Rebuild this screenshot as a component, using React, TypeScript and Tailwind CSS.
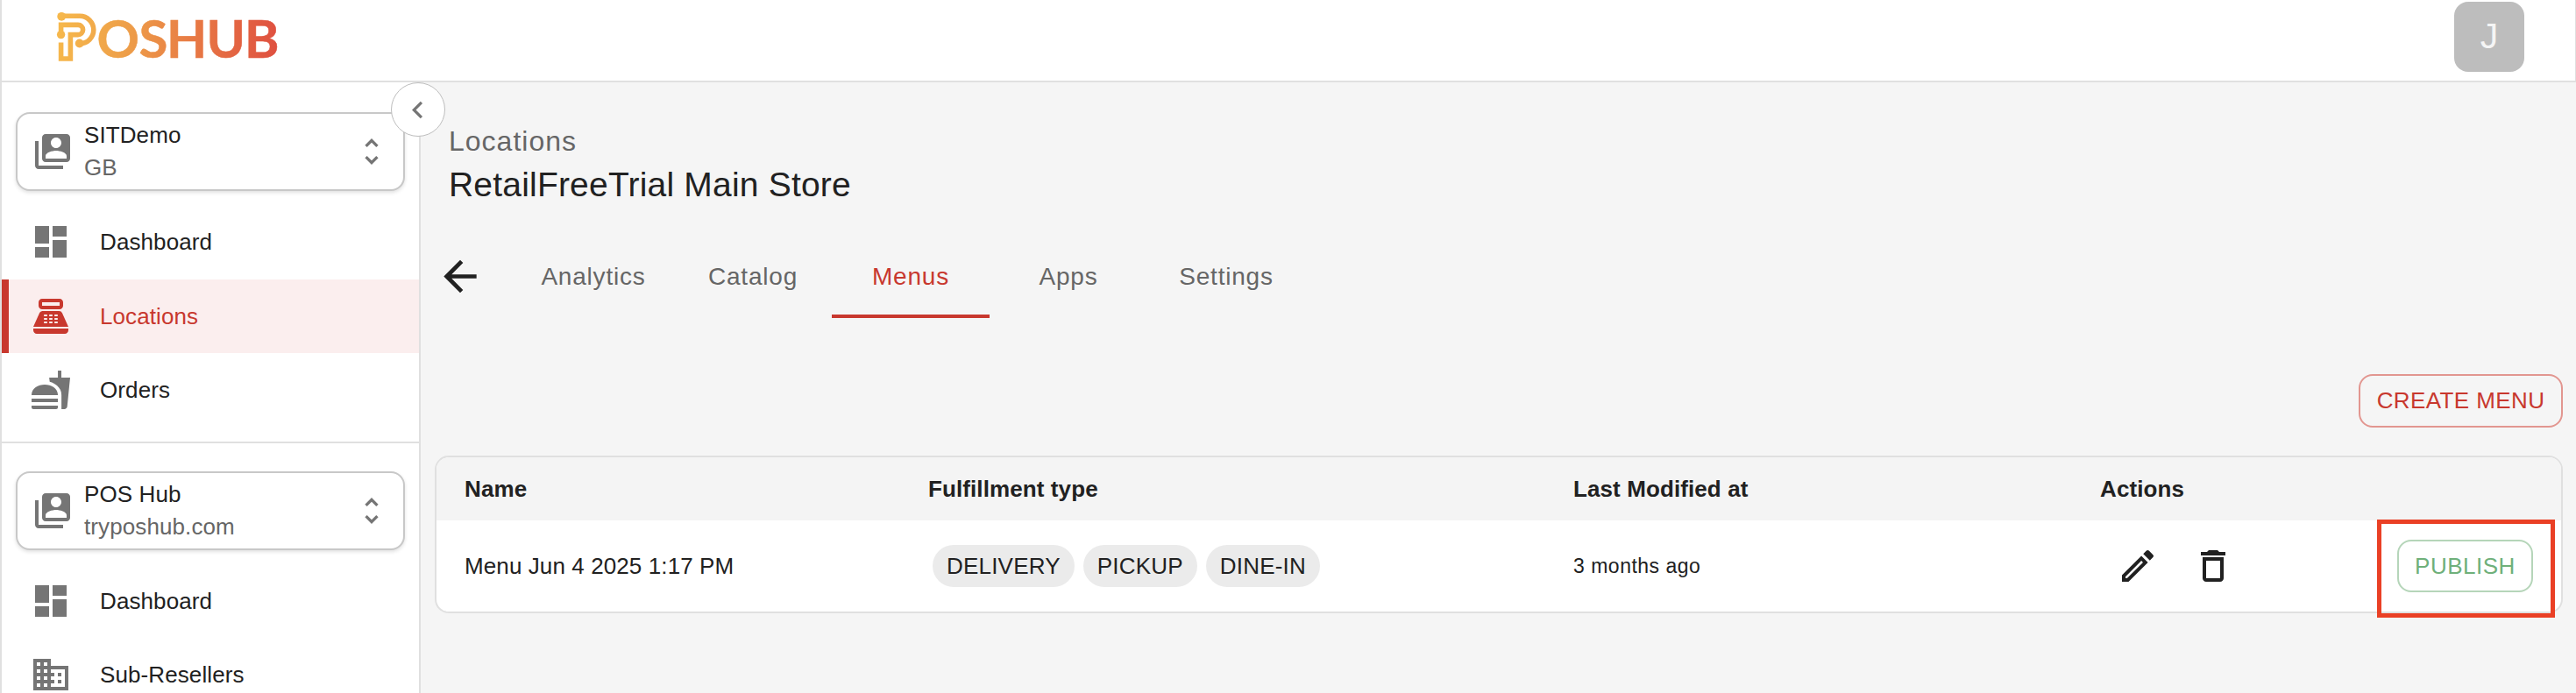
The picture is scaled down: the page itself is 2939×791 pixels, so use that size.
import type { ComponentType, ReactNode } from "react";
import {
  MdArrowBack,
  MdChevronLeft,
  MdDashboard,
  MdDeleteOutline,
  MdDomain,
  MdFastfood,
  MdOutlineEdit,
  MdPointOfSale,
  MdSwitchAccount,
  MdUnfoldMore,
} from "react-icons/md";

type Icon = ComponentType<{ className?: string }>;

function Logo() {
  return (
    <svg width="280" height="92" viewBox="60 0 280 92" className="block overflow-visible" aria-label="POSHUB">
      <defs>
        <linearGradient id="brand" gradientUnits="userSpaceOnUse" x1="66" y1="30" x2="317" y2="50">
          <stop offset="0" stopColor="#f6b84c" />
          <stop offset="0.3" stopColor="#eea049" />
          <stop offset="0.65" stopColor="#e77644" />
          <stop offset="1" stopColor="#df5040" />
        </linearGradient>
      </defs>
      <g fill="none" stroke="url(#brand)" strokeWidth="5.6">
        <path d="M70 18.3H91A15.8 15.8 0 0 1 91 49.9" />
        <path d="M69.6 39.5V28.4H89A5.6 5.6 0 0 1 89 39.6H80.4V67H69.6V48.6" />
      </g>
      <g fill="url(#brand)">
        <circle cx="70.2" cy="18.8" r="4.9" />
        <circle cx="69.6" cy="39.6" r="4.7" />
        <circle cx="90.7" cy="49.5" r="4.9" />
        <text
          x="110.5 158.5 190 235.5 279"
          y="66"
          fontFamily="Lato, sans-serif"
          fontSize="60"
          fontWeight="700"
          stroke="url(#brand)"
          strokeWidth="0.5"
        >
          OSHUB
        </text>
      </g>
    </svg>
  );
}

function AccountSelect({ title, subtitle }: { title: string; subtitle: string }) {
  return (
    <button className="mx-4 flex h-[90px] w-[444px] items-center rounded-2xl border-2 border-[#c8c8c8] bg-white pl-4 pr-[16px] text-left shadow-[0_2px_4px_rgba(0,0,0,0.12)]">
      <MdSwitchAccount className="size-12 shrink-0 text-[#757575]" />
      <span className="-mt-px ml-3 grow text-[26px] leading-[37px] tracking-[0.1px]">
        <span className="block">{title}</span>
        <span className="block text-[#666666]">{subtitle}</span>
      </span>
      <MdUnfoldMore className="size-10 shrink-0 text-[#757575]" />
    </button>
  );
}

function NavItem({ icon: Glyph, label, active }: { icon: Icon; label: string; active?: boolean }) {
  return (
    <a
      className={
        active
          ? "flex h-[84px] items-center border-l-8 border-[#c8382e] bg-[#fbeeee] pl-6 text-[#c8382e]"
          : "flex h-[84px] items-center pl-8"
      }
    >
      <Glyph className={active ? "size-12" : "size-12 text-[#757575]"} />
      <span className="ml-8 text-[26px] tracking-[0.1px]">{label}</span>
    </a>
  );
}

function Sidebar() {
  return (
    <aside className="relative h-[697px] w-[480px] shrink-0 border-x-2 border-[#e0e0e0] bg-white">
      <div className="h-full overflow-hidden">
        <div className="pt-[34px]">
          <AccountSelect title="SITDemo" subtitle="GB" />
          <nav className="pt-4">
            <NavItem icon={MdDashboard} label="Dashboard" />
            <div className="pt-px">
              <NavItem icon={MdPointOfSale} label="Locations" active />
            </div>
            <NavItem icon={MdFastfood} label="Orders" />
          </nav>
        </div>
        <div className="mt-[17px] border-t-2 border-[#e0e0e0] pt-8">
          <AccountSelect title="POS Hub" subtitle="tryposhub.com" />
          <nav className="pt-4">
            <NavItem icon={MdDashboard} label="Dashboard" />
            <NavItem icon={MdDomain} label="Sub-Resellers" />
          </nav>
        </div>
      </div>
      <button className="absolute -right-[30px] top-0 z-10 flex size-[62px] items-center justify-center rounded-full border border-[#bdbdbd] bg-white">
        <MdChevronLeft className="mr-px size-[39px] text-[#757575]" />
      </button>
    </aside>
  );
}

const tabs = [
  { label: "Analytics", width: "w-[184px]" },
  { label: "Catalog", width: "w-[180px]" },
  { label: "Menus", width: "w-[180px]" },
  { label: "Apps", width: "w-[180px]" },
  { label: "Settings", width: "w-[180px]" },
];

function Tabs() {
  return (
    <div className="flex h-24 items-stretch pl-px">
      <button className="mr-[32px] flex w-[56px] items-center justify-center">
        <MdArrowBack className="size-[57px]" />
      </button>
      {tabs.map((tab) => (
        <button
          key={tab.label}
          className={
            tab.label === "Menus"
              ? `${tab.width} border-b-4 border-[#c8382e] pt-1.5 text-[28px] tracking-[0.8px] text-[#c8382e]`
              : `${tab.width} border-b-4 border-transparent pt-1.5 text-[28px] tracking-[0.8px] text-[#666666]`
          }
        >
          {tab.label}
        </button>
      ))}
    </div>
  );
}

function Chip({ children }: { children: ReactNode }) {
  return (
    <span className="flex h-12 items-center rounded-full bg-[#ebebeb] px-4 text-[26px] leading-none tracking-[0.2px]">
      {children}
    </span>
  );
}

const columns = "grid grid-cols-[528px_737px_601px_1fr] items-center";

function MenuTable() {
  return (
    <section className="mt-8 rounded-2xl border-2 border-[#e0e0e0] bg-white">
      <div
        className={`${columns} h-[72px] rounded-t-[14px] bg-[#f4f4f4] text-[26px] font-bold tracking-[0.1px]`}
      >
        <div className="pl-8">Name</div>
        <div className="pl-[33px]">Fulfillment type</div>
        <div className="pl-8">Last Modified at</div>
        <div className="pl-8">Actions</div>
      </div>
      <div className={`${columns} h-[104px]`}>
        <div className="pl-8 text-[26px] tracking-[0.1px]">Menu Jun 4 2025 1:17 PM</div>
        <div className="flex gap-2.5 pl-[38px]">
          <Chip>DELIVERY</Chip>
          <Chip>PICKUP</Chip>
          <Chip>DINE-IN</Chip>
        </div>
        <div className="pl-8 text-[23px] tracking-[0.5px]">3 months ago</div>
        <div className="flex items-center pl-[51px] pr-8">
          <MdOutlineEdit className="size-12" />
          <MdDeleteOutline className="ml-[38px] size-12" />
          <div className="relative ml-auto">
            <button className="flex h-[60px] w-[155px] items-center justify-center rounded-2xl border-2 border-[#b5d5b9] text-[26px] tracking-[0.5px] text-[#6fb07a]">
              PUBLISH
            </button>
            <div className="absolute -bottom-[29px] -left-[23px] -right-[25px] -top-[23px] border-[5px] border-[#ea4025]" />
          </div>
        </div>
      </div>
    </section>
  );
}

export default function App() {
  return (
    <div className="h-[791px] w-[2939px] overflow-hidden bg-[#f5f5f5] font-['Liberation_Sans',Arial,sans-serif] text-[#212121]">
      <header className="flex h-[94px] items-start justify-between border-b-2 border-l-2 border-r border-[#e0e0e0] bg-white pl-[58px] pr-[58px]">
        <Logo />
        <div className="mt-0.5 flex size-20 items-center justify-center rounded-2xl bg-[#bdbdbd] text-[41px] text-[#f5f5f5]">
          J
        </div>
      </header>
      <div className="flex">
        <Sidebar />
        <main className="grow pl-4 pr-[15px] pt-[43px]">
          <div className="pl-4">
            <p className="text-[32px] leading-[48px] tracking-[1px] text-[#666666]">Locations</p>
            <h1 className="pt-px text-[39px] leading-[50px] tracking-[0.2px]">RetailFreeTrial Main Store</h1>
          </div>
          <div className="mt-[31px]">
            <Tabs />
          </div>
          <div className="mt-16 flex justify-end">
            <button className="flex h-[61px] w-[233px] items-center justify-center rounded-2xl border-2 border-[#e29690] text-[26px] tracking-[0.4px] text-[#c8382e]">
              CREATE MENU
            </button>
          </div>
          <MenuTable />
        </main>
      </div>
    </div>
  );
}
